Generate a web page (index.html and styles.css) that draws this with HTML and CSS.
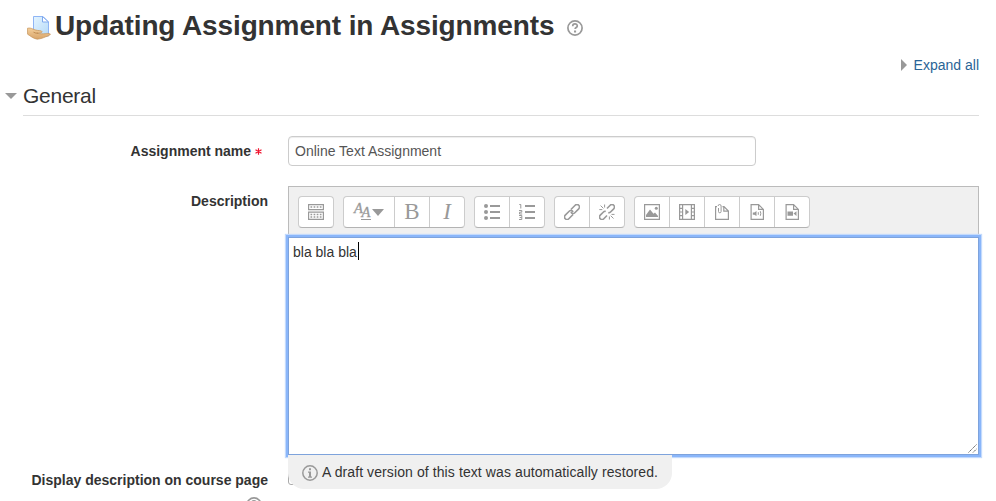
FILE: index.html
```html
<!DOCTYPE html>
<html lang="en">
<head>
    <meta charset="UTF-8">
    <meta name="viewport" content="width=device-width, initial-scale=1.0">
    <title>Updating Assignment in Assignments</title>
    <link rel="stylesheet" href="styles.css">
</head>
<body>
    <header class="page-header">
        <svg class="activity-icon" width="24" height="25" viewBox="0 0 24 25">
            <defs>
                <linearGradient id="paper" x1="0" y1="0" x2="1" y2="1">
                    <stop offset="0" stop-color="#e4f4ff"/>
                    <stop offset="1" stop-color="#b5daf8"/>
                </linearGradient>
                <linearGradient id="hand" x1="0" y1="0" x2="0" y2="1">
                    <stop offset="0" stop-color="#f4cf9c"/>
                    <stop offset="1" stop-color="#d8a469"/>
                </linearGradient>
            </defs>
            <path d="M6.500 1.500h9.500l5.500 5.500v14h-15z" fill="url(#paper)" stroke="#8fb5f5"/>
            <path d="M15.500 1.500v5.500h6z" fill="#fff" stroke="#7fa9ef"/>
            <path d="M.4 13.300c1.800-.5 3.600-.3 5.600.8 2.800 1.500 6.500 1.300 8.500 1.900 1 .6.500 1.700-.7 1.800l-3.500.4c2.500.8 5.500.7 7.800.5 2-.4 3.900-.5 5.300.3-.4 1.500-2.700 2.200-4.700 2.800-2.500 1-4.500 2-8.500 2.400-4-.7-6.500-3-9.600-5z" fill="url(#hand)" stroke="#c6935a" stroke-width=".7"/>
            <path d="M6.500 17.200c1.500.8 2.800 1.100 4.500 1" fill="none" stroke="#b47d43" stroke-width=".8"/>
        </svg>
        <h1>Updating Assignment in Assignments</h1>
        <svg class="help-icon" width="16" height="16" viewBox="0 0 16 16">
            <circle cx="8" cy="8" r="7.100"/>
            <path d="M5.700 6.200c0-3 4.600-3 4.600-.2 0 1.500-2.200 1.600-2.200 3.100"/>
            <rect x="7" y="10.500" width="2.100" height="2"/>
        </svg>
    </header>

    <div class="collapse-actions">
        <a href="#"><span class="arrow-right"></span>Expand all</a>
    </div>

    <form class="mform">
        <h2 class="legend"><span class="arrow-down"></span>General</h2>

        <div class="fitem name-row">
            <label class="fitem-title" for="name">Assignment name <svg class="required" width="7" height="7" viewBox="0 0 7 7"><path d="M3.500 .3v6.400M.5 1.700l6 3.600M6.500 1.700l-6 3.600"/></svg></label>
            <input type="text" id="name" class="name-input" value="Online Text Assignment">
        </div>

        <div class="fitem editor-row">
            <div class="fitem-title">Description</div>
            <div class="editor">
                <div class="toolbar">
                    <div class="group">
                        <button type="button">
                            <svg width="16" height="16" viewBox="0 0 16 16">
                                <path class="line" d="M.6.600h14.800v5H.6zM.6 8.100h14.800v7.300H.6z"/>
                                <path class="dots" d="M2.500 3.100h11.500M2.500 10.500h11.500M2.500 13h11.500"/>
                            </svg>
                        </button>
                    </div>
                    <div class="group">
                        <button type="button" class="wide">
                            <span class="styles-icon"><i>A</i><i class="under">A</i></span>
                            <span class="caret-down"></span>
                        </button>
                        <button type="button" class="letter">B</button>
                        <button type="button" class="letter italic">I</button>
                    </div>
                    <div class="group">
                        <button type="button">
                            <svg width="16" height="16" viewBox="0 0 16 16">
                                <g class="fill"><circle cx="2" cy="2" r="2"/><circle cx="2" cy="8" r="2"/><circle cx="2" cy="14" r="2"/></g>
                                <path class="bars" d="M6 2h10M6 8h10M6 14h10"/>
                            </svg>
                        </button>
                        <button type="button">
                            <svg width="16" height="16" viewBox="0 0 16 16">
                                <path class="line thin" d="M.3.500h1.500v4M0 6.500h2.800v1.700H.5v1.800h2.700M0 11.500h2.800v4H0M.6 13.500h2"/>
                                <path class="bars" d="M6 2h10M6 8h10M6 14h10"/>
                            </svg>
                        </button>
                    </div>
                    <div class="group">
                        <button type="button">
                            <svg width="16" height="16" viewBox="0 0 16 16">
                                <g class="chain" transform="rotate(-45 8 8)">
                                    <path d="M7 10.500H1a2.500 2.500 0 0 1 0-5h5.500a2.500 2.500 0 0 1 2.400 3.200M9 5.500h6a2.500 2.500 0 0 1 0 5H9.500a2.500 2.500 0 0 1-2.400-3.200"/>
                                </g>
                            </svg>
                        </button>
                        <button type="button">
                            <svg width="16" height="16" viewBox="0 0 16 16">
                                <g class="chain" transform="rotate(-45 8 8)">
                                    <path d="M5.500 10.500H1a2.500 2.500 0 0 1 0-5h4.500q1.500 0 2 1.200M10.500 5.500H15a2.500 2.500 0 0 1 0 5h-4.500q-1.500 0-2-1.200"/>
                                </g>
                                <path class="line thin" d="M5.600.500v3M1.600 1.600l2.800 2.800M.3 5.600h3M10.400 12.500v3M11.700 11.700l2.800 2.800M12.500 10.400h3"/>
                            </svg>
                        </button>
                    </div>
                    <div class="group">
                        <button type="button">
                            <svg width="16" height="16" viewBox="0 0 16 16">
                                <path class="line" d="M.6.600h14.800v14.800H.6z"/>
                                <path class="fill" d="M2 13V11l4-5.500 3.500 4.300L11 8.600l3 3.400v1z"/>
                                <circle class="fill" cx="12.300" cy="4.300" r="1.500"/>
                            </svg>
                        </button>
                        <button type="button">
                            <svg width="16" height="16" viewBox="0 0 16 16">
                                <path class="line" d="M.6.600h3v14.800h-3zM12.400.600h3v14.800h-3zM4 .6h8M4 15.400h8M.6 4.300h3M.6 8h3M.6 11.700h3M12.400 4.300h3M12.400 8h3M12.400 11.700h3"/>
                                <path class="fill" d="M6.300 5v6L10.200 8z"/>
                            </svg>
                        </button>
                        <button type="button">
                            <svg width="16" height="16" viewBox="0 0 16 16">
                                <path class="line" d="M3 2.600H1.600v12.800h12.800V7L10 2.600H8.500M9.800 2.800v4.400h4.500"/>
                                <path class="line thin" d="M4.500 4v3.500a1.300 1.300 0 0 0 2.600 0V2a1.500 1.500 0 0 0-3 0"/>
                            </svg>
                        </button>
                        <button type="button">
                            <svg width="16" height="16" viewBox="0 0 16 16">
                                <path class="line" d="M2.100.600h7.500l4.800 4.800v10H2.100zM9.600.800v4.600h4.600"/>
                                <path class="fill" d="M3.800 8.500h1.500L7.500 7v5L5.300 10.700H3.800z"/>
                                <path class="line thin" d="M9.300 8.200v2.600M11.300 7.200q1 2.200 0 4.600"/>
                            </svg>
                        </button>
                        <button type="button">
                            <svg width="16" height="16" viewBox="0 0 16 16">
                                <path class="line" d="M2.100.600h7.500l4.800 4.800v10H2.100zM9.600.800v4.600h4.600"/>
                                <path class="fill" d="M3.500 7.500H9v4.200H3.500zM9.500 9.600L12.500 7.300v4.600z"/>
                            </svg>
                        </button>
                    </div>
                </div>
                <div class="editor-content">
                    <span class="typed">bla bla bla</span>
                    <svg class="resize-grip" width="9" height="9" viewBox="0 0 9 9"><path d="M.5 8.500l8-8M5 8.500L8.500 5"/></svg>
                </div>
                <div class="draft-message">
                    <svg width="16" height="16" viewBox="0 0 16 16">
                        <circle cx="8" cy="8" r="7.200"/>
                        <path class="fill" d="M7 3.200h2v2H7zM6 6.500h3v5h1v1.200H6v-1.200h1V7.700H6z"/>
                    </svg>
                    <span>A draft version of this text was automatically restored.</span>
                </div>
            </div>
        </div>

        <div class="fitem display-row">
            <div class="fitem-title">
                Display description on course page
                <svg class="help-icon" width="16" height="16" viewBox="0 0 16 16">
                    <circle cx="8" cy="8" r="7.100"/>
                    <path d="M5.700 6.200c0-3 4.600-3 4.600-.2 0 1.500-2.200 1.600-2.200 3.100"/>
                    <rect x="7" y="10.500" width="2.100" height="2"/>
                </svg>
            </div>
            <span class="checkbox"></span>
        </div>
    </form>
</body>
</html>
```
FILE: styles.css
```css
:root {
    --text: #333;
    --icon: #999;
    --line: #ccc;
    --focus: #8ab6fa;
}

* {
    box-sizing: border-box;
}

html {
    height: 100%;
    overflow: hidden;
}

body {
    margin: 0;
    height: 501px;
    overflow: hidden;
    background: #fff;
    color: var(--text);
    font-family: "Liberation Sans", Arial, sans-serif;
    font-size: 14px;
    line-height: 20px;
}

svg {
    display: block;
    flex: none;
}

.page-header {
    display: flex;
    height: 50px;
    padding: 5px 0 0 27px;
}

.activity-icon {
    margin-top: 10px;
}

h1 {
    margin: 1px 0 0 4px;
    width: 500px;
    font-size: 28px;
    letter-spacing: -0.12px;
    line-height: 40px;
    white-space: nowrap;
}

.help-icon {
    fill: none;
    stroke: var(--icon);
    stroke-width: 1.7;
}

.help-icon rect {
    fill: var(--icon);
    stroke: none;
}

.page-header .help-icon {
    margin: 15px 0 0 12px;
}

.collapse-actions {
    display: flex;
    align-items: flex-start;
    justify-content: flex-end;
    height: 30px;
    padding: 5px 17px 0 0;
}

.collapse-actions a {
    display: flex;
    align-items: center;
    color: #2a6496;
    text-decoration: none;
}

.arrow-right {
    margin-right: 7px;
    border: 6px solid transparent;
    border-left: 6px solid var(--icon);
    border-right: 0;
}

.arrow-down {
    margin-right: 6px;
    border: 6px solid transparent;
    border-top: 6px solid var(--icon);
    border-bottom: 0;
}

.mform {
    padding: 0 17px 0 5px;
}

.legend {
    display: flex;
    align-items: center;
    height: 35px;
    margin: 0;
    padding-bottom: 3px;
    position: relative;
    font-size: 21px;
    font-weight: normal;
    letter-spacing: -0.25px;
    line-height: 30px;
}

.legend::after {
    content: "";
    position: absolute;
    left: 18px;
    right: 0;
    bottom: -1px;
    border-bottom: 1px solid #ddd;
}

.fitem {
    display: flex;
    gap: 20px;
}

.fitem-title {
    width: 263px;
    flex: none;
    padding-top: 5px;
    text-align: right;
    font-weight: bold;
}

.name-row {
    margin-top: 21px;
}

.name-row .fitem-title {
    padding-right: 6px;
}

.required {
    display: inline-block;
    vertical-align: 1px;
    fill: none;
    stroke: #f0142f;
    stroke-width: 1.2;
}

.name-input {
    width: 468px;
    height: 30px;
    padding: 4px 6px;
    border: 1px solid var(--line);
    border-radius: 4px;
    box-shadow: inset 0 1px 1px rgba(0, 0, 0, 0.075);
    color: #555;
    font: inherit;
}

.editor-row {
    margin-top: 20px;
}

.editor {
    flex: 1;
    height: 269px;
}

.toolbar {
    display: flex;
    gap: 9px;
    height: 51px;
    padding: 9px;
    background: #f0f0f0;
    border: 1px solid #bbb;
    border-bottom: 0;
}

.group {
    display: flex;
    height: 32px;
    background: #fff;
    border: 1px solid var(--line);
    border-bottom-color: #b3b3b3;
    border-radius: 4px;
}

.group button {
    display: flex;
    align-items: center;
    justify-content: center;
    width: 35px;
    padding: 0;
    border: 0;
    border-right: 1px solid var(--line);
    background: none;
    color: var(--icon);
}

.group button svg {
    margin-bottom: 1px;
}

.group button:last-child {
    width: 34px;
    border-right: 0;
}

.group .wide {
    width: 51px;
}

.styles-icon {
    display: flex;
    height: 18px;
    font-family: "Liberation Serif", serif;
    font-size: 14.5px;
    line-height: 13px;
    -webkit-text-stroke: 0.3px var(--icon);
}

.styles-icon i {
    width: 7px;
    height: 14px;
    margin-top: -1px;
}

.styles-icon .under {
    width: 10px;
    margin-top: 3px;
    border-bottom: 1px solid var(--icon);
}

.caret-down {
    border: 6px solid transparent;
    border-top: 7px solid var(--icon);
    border-bottom: 0;
    margin-left: 1px;
}

.group .letter {
    padding-bottom: 1px;
    font-family: "Liberation Serif", serif;
    font-size: 23px;
    line-height: 28px;
}

.group .italic {
    font-style: italic;
}

.line,
.bars,
.dots,
.chain {
    fill: none;
    stroke: var(--icon);
    stroke-width: 1.2;
}

.thin {
    stroke-width: 1;
}

.bars {
    stroke-width: 2;
}

.dots {
    stroke-width: 1.5;
    stroke-dasharray: 1.7 1.4;
}

.chain {
    stroke-width: 1.6;
}

.fill {
    fill: var(--icon);
}

.editor-content {
    position: relative;
    height: 218px;
    padding: 4px;
    background: #fff;
    border: 1px solid #7ea3dc;
    box-shadow: 0 0 0 2px var(--focus), 0 0 1px 3px #c3dafc;
}

.typed {
    display: inline-block;
    height: 18px;
    padding-right: 1px;
    line-height: 20px;
    border-right: 1px solid #000;
}

.resize-grip {
    position: absolute;
    right: 1px;
    bottom: 1px;
    stroke: #666;
    stroke-dasharray: 1.5 .5;
}

/* sits over the bottom of the editor and the next row */
.draft-message {
    position: relative;
    z-index: 1;
    display: flex;
    align-items: center;
    width: 384px;
    height: 34px;
    padding-left: 14px;
    gap: 4px;
    background: #f0f0f0;
    border-radius: 0 0 16px 16px;
    letter-spacing: 0.095px;
    white-space: nowrap;
}

.draft-message svg {
    margin-top: 1px;
}

.draft-message circle {
    fill: none;
    stroke: var(--icon);
    stroke-width: 1.5;
}

.display-row {
    margin-top: 10px;
}

.display-row .help-icon {
    margin: 7px 6px 0 auto;
}

.checkbox {
    width: 13px;
    height: 13px;
    margin-top: 7px;
    border: 1px solid #aaa;
    border-radius: 3px;
}
```
